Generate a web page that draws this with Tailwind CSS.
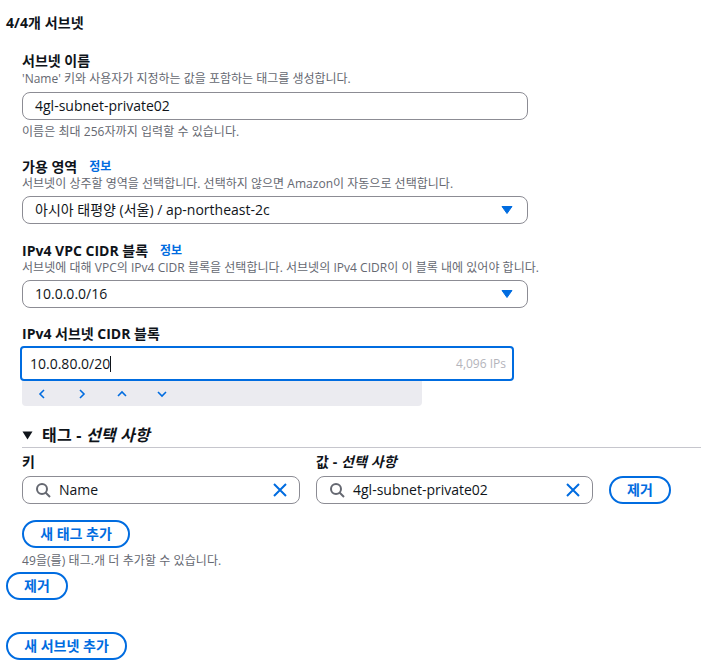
<!doctype html>
<html lang="ko">
<head>
<meta charset="utf-8">
<script src="https://cdn.jsdelivr.net/npm/@tailwindcss/browser@4"></script>
</head>
<body class="bg-white">
<div class="w-[701px] h-[672px] overflow-hidden pl-[6px] pt-[13px] text-[#0f141a] text-[14px] leading-[20px] font-['Open_Sans','Noto_Sans_CJK_KR',sans-serif]">
  <h2 class="font-bold text-[14px] leading-[20px] tracking-[0.1px]">4/4개 서브넷</h2>

  <div class="ml-[16px] mt-[18px]">
    <div class="font-bold">서브넷 이름</div>
    <div class="text-[12px] leading-[16px] text-[#656871]">'Name' 키와 사용자가 지정하는 값을 포함하는 태그를 생성합니다.</div>
    <div class="mt-[5px] w-[506px] h-[28px] border border-[#8c8c94] rounded-lg px-[12px] flex items-center">4gl-subnet-private02</div>
    <div class="mt-[4px] text-[12px] leading-[16px] text-[#656871] tracking-[0.05px]">이름은 최대 256자까지 입력할 수 있습니다.</div>

    <div class="mt-[17px] font-bold flex gap-[12px] h-[20px]"><span>가용 영역</span><span class="text-[12px] text-[#006ce0]">정보</span></div>
    <div class="text-[12px] leading-[16px] text-[#656871] -mt-[1px] tracking-[0.02px]">서브넷이 상주할 영역을 선택합니다. 선택하지 않으면 Amazon이 자동으로 선택합니다.</div>
    <div class="mt-[4px] w-[506px] h-[28px] border border-[#8c8c94] rounded-lg pl-[12px] pr-[14px] flex items-center justify-between">
      <span>아시아 태평양 (서울) / ap-northeast-2c</span>
      <svg width="12" height="10" viewBox="0 0 12 10"><path d="M1 1.5h10L6 8.5z" fill="#006ce0" stroke="#006ce0" stroke-width="1" stroke-linejoin="round"/></svg>
    </div>

    <div class="mt-[17px] font-bold flex gap-[12px] h-[20px]"><span>IPv4 VPC CIDR 블록</span><span class="text-[12px] text-[#006ce0]">정보</span></div>
    <div class="text-[12px] leading-[16px] text-[#656871] -mt-[1px] tracking-[0.03px]">서브넷에 대해 VPC의 IPv4 CIDR 블록을 선택합니다. 서브넷의 IPv4 CIDR이 이 블록 내에 있어야 합니다.</div>
    <div class="mt-[4px] w-[506px] h-[28px] border border-[#8c8c94] rounded-lg pl-[12px] pr-[14px] flex items-center justify-between">
      <span>10.0.0.0/16</span>
      <svg width="12" height="10" viewBox="0 0 12 10"><path d="M1 1.5h10L6 8.5z" fill="#006ce0" stroke="#006ce0" stroke-width="1" stroke-linejoin="round"/></svg>
    </div>

    <div class="mt-[16px] font-bold">IPv4 서브넷 CIDR 블록</div>
    <div class="-ml-[2px] mt-[2px] w-[494px] h-[35px] border-2 border-[#006ce0] rounded-[4px] pl-[8px] pr-[6px] flex items-center justify-between relative z-10 bg-white">
      <span class="text-[14px] flex items-center">10.0.80.0/20<span class="inline-block w-px h-[16px] bg-[#0f141a]"></span></span>
      <span class="text-[12px] text-[#b4b4bb]">4,096 IPs</span>
    </div>
    <div class="w-[400px] h-[25px] bg-[#ebebf0] rounded-b-[4px] flex items-center">
      <div class="w-[40px] flex justify-center"><svg width="12" height="12" viewBox="0 0 12 12" fill="none" stroke="#006ce0" stroke-width="1.6"><path d="M8 2 4 6l4 4"/></svg></div>
      <div class="w-[40px] flex justify-center"><svg width="12" height="12" viewBox="0 0 12 12" fill="none" stroke="#006ce0" stroke-width="1.6"><path d="m4 2 4 4-4 4"/></svg></div>
      <div class="w-[40px] flex justify-center"><svg width="12" height="12" viewBox="0 0 12 12" fill="none" stroke="#006ce0" stroke-width="1.6"><path d="m2 8 4-4 4 4"/></svg></div>
      <div class="w-[40px] flex justify-center"><svg width="12" height="12" viewBox="0 0 12 12" fill="none" stroke="#006ce0" stroke-width="1.6"><path d="m2 4 4 4 4-4"/></svg></div>
    </div>

    <div class="mt-[17px] h-[24px] w-[679px] flex items-center gap-[9px] font-bold text-[16px] tracking-[0.2px]">
      <svg width="11" height="9" viewBox="0 0 11 9"><path d="M.5.5h10L5.5 8.5z" fill="#0f141a"/></svg>
      <span>태그 - <i>선택 사항</i></span>
    </div>
    <div class="w-[679px] border-t border-[#c6c6cd]"></div>

    <div class="mt-[4px] flex gap-[16px] font-bold h-[20px] tracking-[0.1px]">
      <div class="w-[278px]">키</div>
      <div>값 - <i>선택 사항</i></div>
    </div>
    <div class="mt-[4px] flex items-center">
      <div class="w-[278px] h-[28px] border border-[#8c8c94] rounded-lg pl-[12px] pr-[12px] flex items-center">
        <svg width="16" height="16" viewBox="0 0 16 16" fill="none" stroke="#656871" stroke-width="2"><circle cx="7" cy="7" r="5"/><path d="m10.5 10.5 4.5 4.5"/></svg>
        <span class="ml-[8px] flex-1">Name</span>
        <svg width="14" height="14" viewBox="0 0 14 14" fill="none" stroke="#006ce0" stroke-width="2"><path d="m1 1 12 12M13 1 1 13"/></svg>
      </div>
      <div class="ml-[16px] w-[277px] h-[28px] border border-[#8c8c94] rounded-lg pl-[12px] pr-[12px] flex items-center">
        <svg width="16" height="16" viewBox="0 0 16 16" fill="none" stroke="#656871" stroke-width="2"><circle cx="7" cy="7" r="5"/><path d="m10.5 10.5 4.5 4.5"/></svg>
        <span class="ml-[8px] flex-1">4gl-subnet-private02</span>
        <svg width="14" height="14" viewBox="0 0 14 14" fill="none" stroke="#006ce0" stroke-width="2"><path d="m1 1 12 12M13 1 1 13"/></svg>
      </div>
      <button class="ml-[16px] w-[62px] h-[28px] border-2 border-[#006ce0] rounded-full text-[#006ce0] font-bold">제거</button>
    </div>
    <button class="mt-[16px] block w-[108px] h-[28px] border-2 border-[#006ce0] rounded-full text-[#006ce0] font-bold">새 태그 추가</button>
    <div class="mt-[5px] text-[12px] leading-[16px] text-[#656871] tracking-[0.08px]">49을(를) 태그.개 더 추가할 수 있습니다.</div>
  </div>
  <button class="mt-[3px] block w-[62px] h-[28px] border-2 border-[#006ce0] rounded-full text-[#006ce0] font-bold">제거</button>
  <button class="mt-[32px] block w-[121px] h-[28px] border-2 border-[#006ce0] rounded-full text-[#006ce0] font-bold">새 서브넷 추가</button>
</div>
</body>
</html>
